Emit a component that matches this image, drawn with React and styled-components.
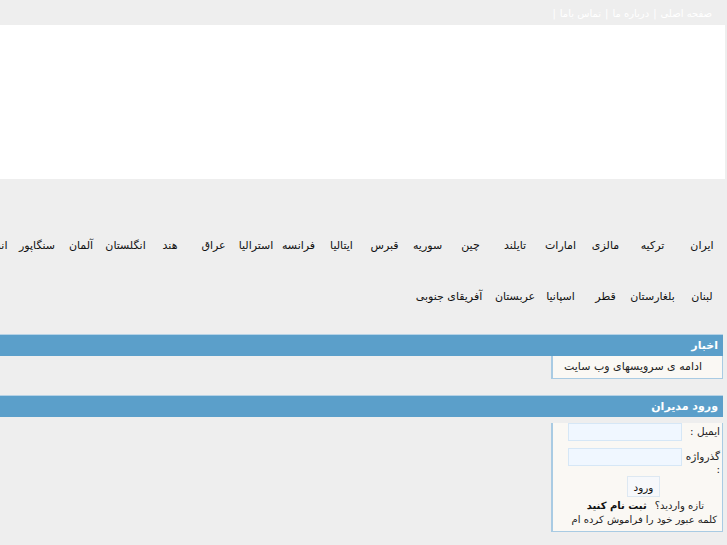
import React from 'react';
import styled, {createGlobalStyle} from 'styled-components';

const GlobalStyle = createGlobalStyle`
    html, body {
        margin: 0;
        padding: 0;
        background: #eeeeee;
        overflow-x: hidden;
    }
    body {
        direction: rtl;
        font-family: "DejaVu Sans", "Noto Sans", sans-serif;
        font-size: 11px;
        color: #222;
    }
`;

const Page = styled.div`
    width: 1100px;
`;

const TopBar = styled.div`
    height: 25px;
    display: flex;
    align-items: center;
    padding-right: 15px;
    padding-top: 2px;
    box-sizing: border-box;
    color: #ffffff;
    font-size: 10px;
`;

const TopLink = styled.a`
    color: #ffffff;
    text-decoration: none;
`;

const Sep = styled.span`
    margin: 0 4px;
`;

const Banner = styled.div`
    height: 154px;
    background: #ffffff;
    margin-right: 2px;
`;

const Countries = styled.div`
    padding: 41px 0 12px;
`;

const CountryGrid = styled.div`
    display: grid;
    grid-template-columns: ${p => p.$cols};
    grid-auto-rows: 51px;
    align-items: center;
    justify-items: center;
`;

const Country = styled.a`
    grid-column: span ${p => p.$span || 1};
    color: #111;
    text-decoration: none;
    white-space: nowrap;
`;

const Section = styled.div`
    margin-right: 4px;
    margin-bottom: ${p => p.$gap || 16}px;
`;

const SectionBar = styled.div`
    height: 22px;
    background: #5b9fca;
    border-top: 1px solid #b5d2e6;
    box-sizing: border-box;
    color: #fff;
    font-weight: bold;
    display: flex;
    align-items: center;
    padding-right: 5px;
`;

const Panel = styled.div`
    width: 172px;
    box-sizing: border-box;
    background: #faf8f4;
    border: 1px solid #a9cbe3;
    border-left: 2px solid #a9cbe3;
    border-top: none;
    padding: ${p => p.$pad || '0'};
    font-size: ${p => p.$size || 11}px;
`;

const NewsItem = styled.div`
    height: 22px;
    line-height: 22px;
    padding-right: 20px;
`;

const FormTable = styled.table`
    border-collapse: collapse;
    margin-top: 6px;
    font-size: 10.5px;
    td {
        padding: 0 2px;
        vertical-align: top;
    }
`;

const Label = styled.td`
    width: 33px;
    padding-top: 2px !important;
    line-height: 13px;
`;

const Input = styled.input`
    width: 114px;
    height: 18px;
    box-sizing: border-box;
    background: #f0f7ff;
    border: 1px solid #d6e7f6;
    margin: 0 0 7px 0;
    display: block;
`;

const Center = styled.div`
    text-align: center;
`;

const Button = styled.button`
    font-family: "DejaVu Sans", sans-serif;
    font-size: 10.5px;
    height: 21px;
    width: 33px;
    padding: 0;
    background: #f6f8fb;
    border: 1px solid #dde8f2;
    color: #111;
    margin: 0 0 2px 12px;
`;

const Line = styled.div`
    padding-right: ${p => p.$indent || 0}px;
    line-height: 14px;
    white-space: nowrap;
`;

const Strong = styled.a`
    font-weight: bold;
    color: #111;
    text-decoration: none;
    margin-right: 8px;
`;

const cols = [50, 49, 45, 45, 46, 43, 43, 43, 43, 43, 42, 43, 44, 45, 44, 44, 50].map(w => w + 'px').join(' ');

const row1 = ['ایران', 'ترکیه', 'مالزی', 'امارات', 'تایلند', 'چین', 'سوریه', 'قبرس', 'ایتالیا', 'فرانسه', 'استرالیا', 'عراق', 'هند', 'انگلستان', 'آلمان', 'سنگاپور', 'اندونزی'];
const row2 = [['لبنان'], ['بلغارستان'], ['قطر'], ['اسپانیا'], ['عربستان'], ['آفریقای جنوبی', 2]];

export default function App() {
    return (
        <Page>
            <GlobalStyle />
            <TopBar>
                <TopLink href="#">صفحه اصلی</TopLink><Sep>|</Sep>
                <TopLink href="#">درباره ما</TopLink><Sep>|</Sep>
                <TopLink href="#">تماس باما</TopLink><Sep>|</Sep>
            </TopBar>
            <Banner />
            <Countries>
                <CountryGrid $cols={cols}>
                    {row1.map(c => <Country key={c} href="#">{c}</Country>)}
                    {row2.map(([c, s]) => <Country key={c} href="#" $span={s}>{c}</Country>)}
                </CountryGrid>
            </Countries>
            <Section $gap={16}>
                <SectionBar>اخبار</SectionBar>
                <Panel>
                    <NewsItem>ادامه ی سرویسهای وب سایت</NewsItem>
                </Panel>
            </Section>
            <Section>
                <SectionBar>ورود مدیران</SectionBar>
                <Panel $pad="0 0 4px" $size={10}>
                    <FormTable>
                        <tbody>
                            <tr>
                                <Label>ایمیل :</Label>
                                <td><Input type="text" /></td>
                            </tr>
                            <tr>
                                <Label>گذرواژه :</Label>
                                <td><Input type="password" /></td>
                            </tr>
                        </tbody>
                    </FormTable>
                    <Center><Button>ورود</Button></Center>
                    <Line $indent={18}>تازه واردید؟<Strong href="#">ثبت نام کنید</Strong></Line>
                    <Line $indent={5}>کلمه عبور خود را فراموش کرده ام</Line>
                </Panel>
            </Section>
        </Page>
    );
}
